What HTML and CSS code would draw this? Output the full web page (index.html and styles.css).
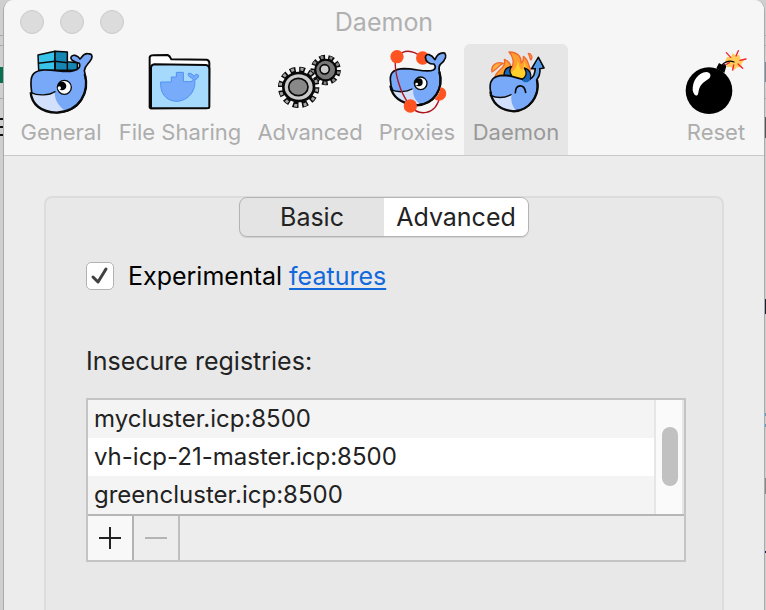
FILE: index.html
```html
<!DOCTYPE html>
<html lang="en">
<head>
<meta charset="utf-8">
<title>Daemon</title>
<link rel="stylesheet" href="styles.css">
</head>
<body>
<main class="window">
  <header class="chrome">
    <div class="titlebar">
      <div class="lights">
        <button class="light" type="button" aria-label="Close"></button>
        <button class="light" type="button" aria-label="Minimize"></button>
        <button class="light" type="button" aria-label="Zoom"></button>
      </div>
      <h1 class="title">Daemon</h1>
    </div>
    <nav class="toolbar">
      <button class="tool" type="button">
        <svg class="icon" viewBox="84 144 204 204" aria-hidden="true">
          <g stroke="#0a0a0a" stroke-width="4.500" stroke-linejoin="round">
            <path fill="#37c3ea" d="M117 165L168 154V211H119Z"/>
            <path fill="#1687b5" d="M168 154L205 156V185L235 188V211H168Z"/>
            <path fill="none" d="M118 190L168 184L205 188M205 185V211M168 184V211"/>
          </g>
          <path fill="#78a9f8" stroke="#0a0a0a" stroke-width="5" stroke-linejoin="round" d="M96 250C95 222 108 212 134 210C173 209 201 220 224 212C240 208 245 200 241 190C232 187 213 182 216 172C220 161 236 166 243 177C248 175 251 160 266 161C283 161 281 174 273 184C265 194 257 199 256 212C270 262 256 316 204 333C152 349 93 319 96 250Z"/>
          <path fill="#d2e0fb" d="M97 280C117 288 147 283 168 275C165 300 180 317 197 332C158 347 106 327 97 280Z"/>
          <path fill="none" stroke="#0a0a0a" stroke-width="4" stroke-linecap="round" d="M96 278C116 288 150 287 168 275"/>
          <path fill="none" stroke="#0a0a0a" stroke-width="7" d="M257 222C273 276 242 335 173 338C125 337 98 312 95 277"/>
          <circle cx="196" cy="262" r="21" fill="#fff" stroke="#0a0a0a" stroke-width="4"/>
          <circle cx="189" cy="258" r="13" fill="#050505"/><circle cx="181" cy="264" r="5" fill="#fff"/>
        </svg>
        <span class="tool-label">General</span>
      </button>
      <button class="tool" type="button">
        <svg class="icon" viewBox="48 24 204 204" aria-hidden="true">
          <path fill="#fff" stroke="#080808" stroke-width="6" stroke-linejoin="round" d="M59 197V52Q61 46 68 46L113 45Q119 47 124 58L230 59Q238 61 238 69L237 203L62 205Q58 204 59 197Z"/>
          <path fill="#a6dafc" stroke="#080808" stroke-width="6" stroke-linejoin="round" d="M63 205V82Q64 74 73 73L228 75Q237 76 238 86V201Q237 205 230 205Z"/>
          <path fill="#78acfb" stroke="#4f91f2" stroke-width="3" stroke-linejoin="round" d="M92 126H124V111H139V97H160V125H175C188 125 192 121 187 115C177 112 173 105 175 100C184 99 189 103 191 110C195 102 200 101 206 106C206 114 199 118 194 119C199 149 177 184 137 184C105 181 90 157 92 126Z"/>
        </svg>
        <span class="tool-label">File Sharing</span>
      </button>
      <button class="tool" type="button">
        <svg class="icon" viewBox="63 24 204 204" aria-hidden="true">
          <g fill="none" stroke="#080808">
            <circle cx="212" cy="90" r="37" stroke-width="17" stroke-dasharray="16.500 9.330"/>
            <circle cx="212" cy="90" r="39" stroke="#858585" stroke-width="9" stroke-dasharray="8.500 18.730" stroke-dashoffset="-4"/>
          </g>
          <circle cx="212" cy="90" r="31" fill="#777" stroke="#080808" stroke-width="6"/>
          <circle cx="209" cy="88" r="14" fill="#ccc" stroke="#080808" stroke-width="5"/>
          <g fill="none" stroke="#080808">
            <circle cx="131" cy="142" r="53" stroke-width="18" stroke-dasharray="17 10.750"/>
            <circle cx="131" cy="142" r="55" stroke="#a5a5a5" stroke-width="9" stroke-dasharray="9 19.800" stroke-dashoffset="-4"/>
          </g>
          <ellipse cx="131" cy="141" rx="46" ry="42" fill="#c9c9c9" stroke="#080808" stroke-width="8"/>
          <ellipse cx="130" cy="141" rx="29" ry="26" fill="#888" stroke="#080808" stroke-width="5"/>
        </svg>
        <span class="tool-label">Advanced</span>
      </button>
      <button class="tool" type="button">
        <svg class="icon" viewBox="39 24 204 204" aria-hidden="true">
          <path fill="none" stroke="#ad1420" stroke-width="4" d="M81 50Q113 16 158 54"/>
          <circle cx="158" cy="54" r="20" fill="#ff5421"/>
          <path fill="#78a9f8" stroke="#0a0a0a" stroke-width="5" stroke-linejoin="round" d="M61 119C60 95 75 87 102 86C137 86 170 99 190 90C198 86 197 79 192 72C178 73 167 64 166 52C169 38 183 42 195 59C200 46 210 37 224 39C232 50 222 64 211 73C205 79 207 86 208 95C217 137 205 179 164 191C111 203 62 174 61 119Z"/>
          <path fill="#d2e0fb" d="M63 151C84 158 107 154 130 147C127 168 137 181 149 192C108 197 71 181 63 151Z"/>
          <path fill="none" stroke="#0a0a0a" stroke-width="4" stroke-linecap="round" d="M62 149C83 158 109 157 126 147"/>
          <path fill="none" stroke="#0a0a0a" stroke-width="7" d="M208 95C223 146 191 194 139 196C92 191 66 169 61 137"/>
          <circle cx="152" cy="130" r="19" fill="#fff" stroke="#0a0a0a" stroke-width="4"/>
          <circle cx="146" cy="127" r="12" fill="#050505"/><circle cx="140" cy="132" r="4" fill="#fff"/>
          <path fill="none" stroke="#ad1420" stroke-width="4" d="M76 50C72 92 87 155 121 198C144 227 196 230 210 169"/>
          <g fill="#ff5421"><circle cx="81" cy="50" r="20"/><circle cx="121" cy="198" r="20"/><path d="M211 142C230 143 235 168 220 178C212 184 200 182 194 177C205 166 210 157 211 142Z"/></g>
        </svg>
        <span class="tool-label">Proxies</span>
      </button>
      <button class="tool tool-active" type="button" aria-pressed="true">
        <svg class="icon" viewBox="66 24 204 204" aria-hidden="true">
          <path fill="#ff9f32" stroke="#f2672c" stroke-width="4" stroke-linejoin="round" d="M105 111C108 91 140 85 133 58C150 64 153 74 152 87C165 72 160 49 147 36C176 37 185 52 183 69C191 65 190 55 190 49C207 60 203 74 211 86L205 115Z"/>
          <path fill="#ffd02c" d="M122 108C134 100 143 92 147 82L154 98C166 86 173 76 173 62C180 76 176 84 186 91C190 82 193 74 194 66C196 80 204 92 202 110L180 120Z"/>
          <path fill="#ffad3c" stroke="#f2672c" stroke-width="4" stroke-linejoin="round" d="M96 96C92 75 110 63 130 70C113 77 117 84 96 96ZM205 40C214 41 219 51 213 60C208 54 209 46 205 40Z"/>
          <path fill="#1766b9" stroke="#0a0a0a" stroke-width="4" stroke-linejoin="round" d="M132 106C132 92 139 81 154 80C147 89 149 98 155 106Z"/>
          <path fill="#78a9f8" stroke="#0a0a0a" stroke-width="5" stroke-linejoin="round" d="M91 150C87 120 101 107 130 106C166 106 186 124 207 119C222 111 224 103 226 86L215 86L235 52L252 84L239 86C242 98 238 109 230 120C240 158 219 199 180 210C134 221 94 191 91 150Z"/>
          <path fill="#4f9ae8" d="M221 84L235 58L247 82L236 83Q238 96 232 107L225 106Q231 96 230 83Z"/>
          <path fill="#1766b9" d="M185 119C200 110 202 99 193 84C209 88 218 106 210 120C204 130 191 129 185 119Z"/>
          <path fill="none" stroke="#0a0a0a" stroke-width="4" stroke-linejoin="round" d="M185 119C200 110 202 99 193 84C209 88 216 102 211 118"/>
          <path fill="#d2e0fb" d="M93 166C112 174 136 172 155 164C151 184 158 199 168 211C132 213 102 194 93 166Z"/>
          <path fill="none" stroke="#0a0a0a" stroke-width="4" stroke-linecap="round" d="M91 166C114 176 134 174 153 164"/>
          <path fill="none" stroke="#0a0a0a" stroke-width="5" stroke-linecap="round" d="M166 158C167 131 193 131 197 157"/>
          <path fill="none" stroke="#0a0a0a" stroke-width="7" d="M231 120C241 166 209 212 161 214C119 210 96 188 91 155"/>
        </svg>
        <span class="tool-label">Daemon</span>
      </button>
      <button class="tool tool-last" type="button">
        <svg class="icon" viewBox="66 24 204 204" aria-hidden="true">
          <path fill="#ffcc5c" d="M195 64L201 51L213 51L218 40L227 46L238 44L241 57L252 61L244 72L245 82L231 82L222 90L213 81L200 81L202 70Z"/>
          <path stroke="#f32031" stroke-width="4" stroke-linecap="round" d="M199 38L212 52M235 32L228 48M258 57L240 61M248 85L234 72M218 90L221 75M196 75L208 68"/>
          <circle cx="147" cy="152" r="70"/>
          <path d="M169 85L177 69L187 75L194 72L199 79L193 99Z"/>
          <path fill="none" stroke="#000" stroke-width="4" stroke-linecap="round" d="M186 75Q203 58 222 66"/>
          <path fill="#fff" d="M98 151C97 121 115 98 139 96C151 97 155 106 148 115C139 124 119 128 115 158C113 172 102 169 98 151Z"/>
        </svg>
        <span class="tool-label">Reset</span>
      </button>
    </nav>
  </header>
  <section class="content">
    <div class="panel">
      <div class="segments">
        <button class="segment" type="button">Basic</button>
        <button class="segment segment-on" type="button" aria-pressed="true">Advanced</button>
      </div>
      <div class="form">
        <div class="option">
          <span class="check">
            <input class="check-input" type="checkbox" id="experimental" checked>
            <svg class="check-mark" viewBox="0 0 28 28" aria-hidden="true"><path d="M7 15L12 20L20 7"/></svg>
          </span>
          <span><label for="experimental">Experimental</label> <a class="link" href="#features">features</a></span>
        </div>
        <h2 class="heading" id="registries">Insecure registries:</h2>
        <div class="list">
          <div class="list-view">
            <ul class="rows" aria-labelledby="registries">
              <li class="row">mycluster.icp:8500</li>
              <li class="row">vh-icp-21-master.icp:8500</li>
              <li class="row">greencluster.icp:8500</li>
            </ul>
            <div class="track"><div class="thumb"></div></div>
          </div>
          <div class="actions">
            <button class="action action-add" type="button" aria-label="Add registry">
              <svg class="sign" viewBox="0 0 22 22" aria-hidden="true"><path d="M0 11H22M11 0V22"/></svg>
            </button>
            <button class="action action-remove" type="button" aria-label="Remove registry" disabled>
              <svg class="sign" viewBox="0 0 22 22" aria-hidden="true"><path d="M0 11H22"/></svg>
            </button>
          </div>
        </div>
      </div>
    </div>
  </section>
</main>
</body>
</html>
```
FILE: styles.css
```css
* { box-sizing: border-box; }

body {
  margin: 0;
  min-height: 100vh;
  display: flex;
  padding: 0 1px 0 3px;
  font-family: Inter, Roboto, "Liberation Sans", sans-serif;
  font-size: 25px;
  line-height: 32px;
  color: #222;
  background:
    linear-gradient(#0a7050, #0a7050) 0 67px / 3px 16px no-repeat,
    linear-gradient(#111, #111) 0 118px / 3px 2px no-repeat,
    linear-gradient(#111, #111) 0 126px / 4px 2px no-repeat,
    linear-gradient(#111, #111) 0 134px / 4px 2px no-repeat,
    linear-gradient(#7d8c9c, #7d8c9c) 100% 62px / 1px 20px no-repeat,
    linear-gradient(#555, #555) 100% 117px / 1px 21px no-repeat,
    linear-gradient(#1b1f33, #1b1f33) 100% 299px / 1px 15px no-repeat,
    linear-gradient(#5aa0c4, #5aa0c4) 100% 413px / 1px 3px no-repeat,
    linear-gradient(#5aa0c4, #5aa0c4) 100% 424px / 1px 3px no-repeat,
    linear-gradient(#888, #888) 100% 478px / 1px 16px no-repeat,
    linear-gradient(#1b1f50, #1b1f50) 100% 551px / 1px 2px no-repeat,
    linear-gradient(#aaa, #aaa) 0 35px / 100% 1px no-repeat,
    linear-gradient(#aaa, #aaa) 0 45px / 100% 1px no-repeat,
    linear-gradient(#aaa, #aaa) 0 98px / 100% 1px no-repeat,
    #cfcfcf;
}

button {
  margin: 0;
  padding: 0;
  border: 0;
  background: none;
  font: inherit;
  color: inherit;
}

.window {
  flex: 1;
  display: flex;
  flex-direction: column;
  border: 0 solid #aaa;
  border-width: 0 1px;
  border-radius: 10px 10px 0 0;
  overflow: hidden;
  background: #ececec;
}

.chrome {
  background: #f6f6f6;
  border-bottom: 1px solid #c9c9c9;
}

.titlebar {
  display: grid;
  grid-template-columns: 1fr auto 1fr;
  align-items: center;
  height: 44px;
  padding: 0 16px;
}

.lights { display: flex; gap: 16px; }

.light {
  width: 24px;
  height: 24px;
  border: 1px solid #cbcbcb;
  border-radius: 50%;
  background: #dcdcdc;
}

.title {
  margin: 0;
  font-size: 25px;
  font-weight: 400;
  color: #b0b0b0;
}

.toolbar {
  display: grid;
  grid-template-columns: 98px 140px 120px 94px 104px 1fr;
  padding: 0 8px;
  font-size: 22px;
  color: #adadad;
}

.tool {
  display: flex;
  flex-direction: column;
  align-items: center;
  padding: 4px 0 7px;
  white-space: nowrap;
}

.tool-active {
  color: #999;
  background: #e6e6e6;
  border-radius: 6px 6px 0 0;
}

.tool-last { justify-self: end; width: 80px; }

.icon { width: 68px; height: 68px; }

.content {
  flex: 1;
  display: flex;
  padding: 40px 40px 0;
}

.panel {
  flex: 1;
  border: 2px solid #dcdcdc;
  border-bottom: 0;
  border-radius: 8px 8px 0 0;
  padding: 0 36px 40px;
  background: #e8e8e8;
}

.segments {
  display: grid;
  grid-template-columns: 1fr 1fr;
  width: 290px;
  height: 40px;
  margin: -1px auto 0;
  border: 1px solid #b4b4b4;
  border-radius: 8px;
  overflow: hidden;
  background: #e4e4e4;
  box-shadow: 0 1px 1px #d0d0d0;
}

.segment-on { background: #fff; }

.form { padding-left: 4px; }

.option {
  display: flex;
  align-items: center;
  gap: 14px;
  margin-top: 23px;
  color: #000;
}

.check { display: grid; width: 28px; height: 28px; }

.check-input,
.check-mark { grid-area: 1 / 1; width: 28px; height: 28px; }

.check-input {
  appearance: none;
  margin: 0;
  border: 1px solid #b2b2b2;
  border-radius: 5px;
  background: #fff;
}

.check-mark {
  fill: none;
  stroke: #404040;
  stroke-width: 3;
  stroke-linecap: round;
  stroke-linejoin: round;
  pointer-events: none;
}

.link {
  color: #1269dc;
  text-decoration-thickness: 2px;
  text-underline-offset: 3px;
}

.heading {
  margin: 53px 0 21px;
  font-size: 25px;
  font-weight: 400;
}

.list { border: 2px solid #c4c4c4; }

.list-view {
  display: flex;
  border-bottom: 2px solid #b6b6b6;
}

.rows {
  flex: 1;
  margin: 0;
  padding: 0;
  list-style: none;
  font-size: 24px;
}

.row {
  height: 38px;
  padding: 0 6px;
  line-height: 38px;
  background: #f4f4f4;
}

.row:nth-child(even) { background: #fff; }

.track {
  width: 30px;
  padding: 27px 4px 0 6px;
  border: 2px solid #e6e6e6;
  border-width: 0 2px;
  background: #fafafa;
}

.thumb {
  width: 16px;
  height: 59px;
  border-radius: 8px;
  background: #c1c1c1;
}

.actions {
  display: flex;
  height: 44px;
  background: #ededed;
}

.action {
  display: grid;
  place-items: center;
  width: 46px;
  border-right: 2px solid #bebebe;
}

.action-add { background: #f8f8f8; border-color: #b2b2b2; }

.sign {
  width: 22px;
  height: 22px;
  fill: none;
  stroke: #222;
  stroke-width: 2;
}

.action-remove .sign { stroke: #b4b4b4; }
```
